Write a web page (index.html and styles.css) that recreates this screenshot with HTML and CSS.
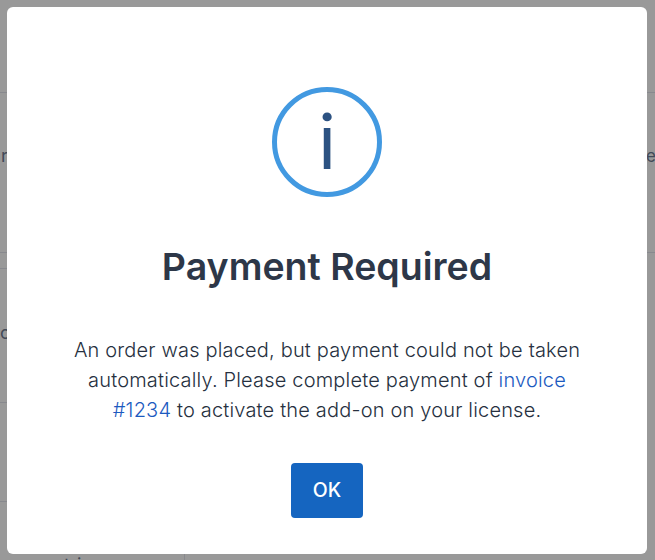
FILE: index.html
```html
<!DOCTYPE html>
<html lang="en">
<head>
<meta charset="utf-8">
<title>Payment Required</title>
<link rel="stylesheet" href="styles.css">
</head>
<body>
<div class="page" aria-hidden="true">
  <section class="row row-top"></section>
  <section class="row row-one"><span>r</span><span class="end">e</span></section>
  <section class="row row-gap"></section>
  <section class="row row-two"><span>c</span></section>
  <section class="row row-three"></section>
  <section class="row row-last"><div class="cell">tri</div></section>
</div>
<main class="modal" role="dialog" aria-labelledby="title">
  <div class="icon">i</div>
  <h2 id="title" class="title">Payment Required</h2>
  <p class="message">An order was placed, but payment could not be taken<br>automatically. Please complete payment of <a href="#">invoice<br>#1234</a> to activate the add-on on your license.</p>
  <button class="ok">OK</button>
</main>
</body>
</html>
```
FILE: styles.css
```css
* { box-sizing: border-box; }
body {
  margin: 0;
  height: 560px;
  overflow: hidden;
  background: #999;
  font-family: Inter, sans-serif;
}
.page { height: 560px; overflow: hidden; color: #424a58; font-size: 18px; }
.row { border-bottom: 1px solid #88898e; display: flex; justify-content: space-between; }
.row-top { height: 93px; }
.row-one { height: 160px; padding: 52px 0 0 1px; }
.row-one .end { font-size: 17px; padding-top: 1px; margin-right: -1px; }
.row-gap { height: 16px; width: 320px; }
.row-two { height: 134px; width: 320px; padding-top: 53px; }
.row-three { height: 99px; width: 320px; }
.row-last { height: 80px; }
.cell { width: 185px; border-right: 1px solid #88898e; padding: 52px 0 0 64px; }
.modal {
  position: absolute;
  left: 7px;
  top: 7px;
  width: 640px;
  height: 547px;
  padding-top: 80px;
  background: #fff;
  border-radius: 6px;
  display: flex;
  flex-direction: column;
  align-items: center;
}
.icon {
  width: 110px;
  height: 110px;
  border: 5px solid #4299e1;
  border-radius: 50%;
  color: #2c5282;
  font-size: 75px;
  line-height: 100px;
  text-align: center;
}
.title {
  margin: 46px 0 0;
  color: #2d3748;
  font-size: 37.5px;
  font-weight: 600;
  line-height: 48px;
  white-space: nowrap;
}
.message {
  margin: 44px 0 0;
  color: #263040;
  font-size: 20px;
  line-height: 30px;
  font-weight: 340;
  letter-spacing: 0.18px;
  text-align: center;
  white-space: nowrap;
}
.message a { color: #1c5abf; text-decoration: none; }
.ok {
  width: 72px;
  height: 55px;
  margin: 38px 0 0;
  padding: 0;
  border: 0;
  border-radius: 4px;
  background: #1565c0;
  color: #fff;
  font: 500 19.5px/55px Inter, sans-serif;
}
```
